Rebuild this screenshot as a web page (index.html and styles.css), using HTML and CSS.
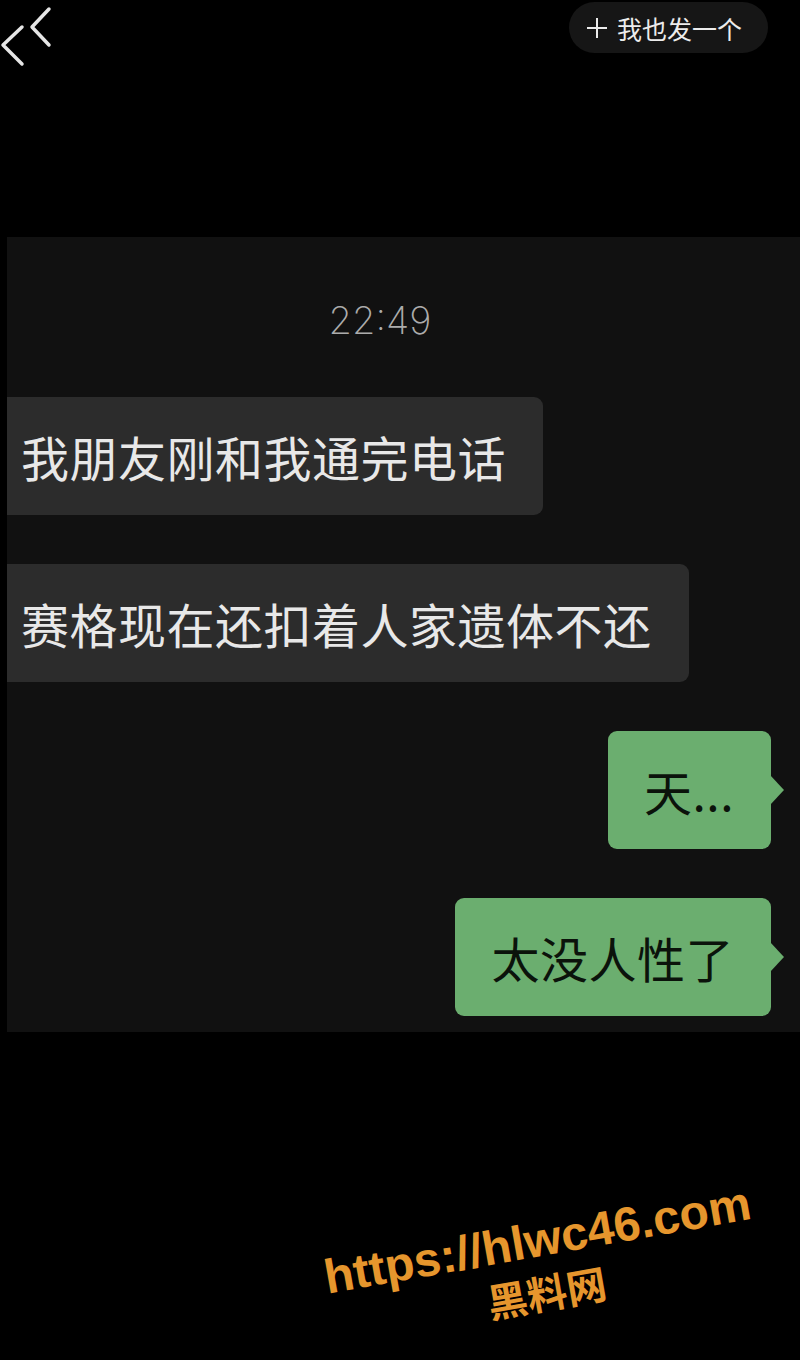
FILE: index.html
```html
<!DOCTYPE html>
<html lang="zh-CN">
<head>
    <meta charset="UTF-8">
    <meta name="viewport" content="width=device-width, initial-scale=1.0">
    <title>聊天截图</title>
    <link rel="stylesheet" href="styles.css">
</head>
<body>
    <div class="screen">
        <div class="topbar">
            <svg class="back" width="56" height="70" viewBox="0 0 56 70">
                <polyline points="22,27 3,45 22,64" />
                <polyline points="49,9 32,27 49,45" />
            </svg>
            <div class="post-btn">
                <svg class="plus" width="20" height="20" viewBox="0 0 20 20">
                    <line x1="10" y1="0" x2="10" y2="20" />
                    <line x1="0" y1="10" x2="20" y2="10" />
                </svg>
                <span>我也发一个</span>
            </div>
        </div>

        <div class="chat">
            <div class="time">22:49</div>
            <div class="messages">
                <div class="row left"><div class="bubble gray">我朋友刚和我通完电话</div></div>
                <div class="row left"><div class="bubble gray">赛格现在还扣着人家遗体不还</div></div>
                <div class="row right"><div class="bubble green">天...</div></div>
                <div class="row right"><div class="bubble green">太没人性了</div></div>
            </div>
        </div>

        <div class="watermark">
            <div class="wm-url">https://hlwc46.com</div>
            <div class="wm-name">黑料网</div>
        </div>
    </div>
</body>
</html>
```

FILE: styles.css
```css
body {
    margin: 0;
    background-color: #000000;
    font-family: "Noto Sans CJK SC", "Noto Sans", sans-serif;
}
.screen {
    position: relative;
    width: 800px;
    height: 1360px;
    overflow: hidden;
}
.topbar {
    height: 237px;
    display: flex;
    justify-content: space-between;
    align-items: flex-start;
}
.back polyline {
    fill: none;
    stroke: #e6e6e6;
    stroke-width: 3.5;
    stroke-linecap: round;
    stroke-linejoin: round;
}
.post-btn {
    margin-top: 2px;
    margin-right: 32px;
    height: 51px;
    padding: 0 26px 0 18px;
    display: flex;
    align-items: center;
    gap: 10px;
    background-color: #161616;
    border-radius: 26px;
    color: #ececec;
    font-size: 25px;
}
.plus line {
    stroke: #ececec;
    stroke-width: 2;
}
.chat {
    margin-left: 7px;
    height: 795px;
    background-color: #111111;
    overflow: hidden;
}
.time {
    padding-top: 61px;
    padding-right: 47px;
    height: 44px;
    line-height: 44px;
    text-align: center;
    font-family: Inter, "Liberation Sans", sans-serif;
    font-weight: 200;
    font-size: 38px;
    color: #acacac;
}
.messages {
    margin-top: 55px;
    display: flex;
    flex-direction: column;
    gap: 49px;
}
.row {
    display: flex;
}
.row.left {
    justify-content: flex-start;
}
.row.right {
    justify-content: flex-end;
}
.bubble {
    position: relative;
    height: 118px;
    line-height: 118px;
    padding: 0 37px 0 36px;
    border-radius: 9px;
    font-size: 48px;
    letter-spacing: 0.5px;
    white-space: nowrap;
}
.gray {
    margin-left: -22px;
    background-color: #2c2c2c;
    color: #e8e8e8;
}
.green {
    margin-right: 29px;
    background-color: #6bae6f;
    color: #0b130b;
}
/* 绿色气泡右侧的小尖角 */
.green::after {
    content: "";
    position: absolute;
    right: -13px;
    top: 50%;
    margin-top: -15px;
    border-top: 15px solid transparent;
    border-bottom: 15px solid transparent;
    border-left: 14px solid #6bae6f;
}
.watermark {
    position: absolute;
    left: 292px;
    top: 1214px;
    width: 500px;
    text-align: center;
    transform: rotate(-10deg);
    color: #e6962d;
    font-weight: bold;
}
.wm-url {
    height: 52px;
    line-height: 52px;
    font-family: "Liberation Sans", Arial, sans-serif;
    font-size: 48px;
}
.wm-name {
    height: 52px;
    line-height: 52px;
    font-family: "Noto Sans CJK SC", sans-serif;
    font-size: 40px;
}
```
